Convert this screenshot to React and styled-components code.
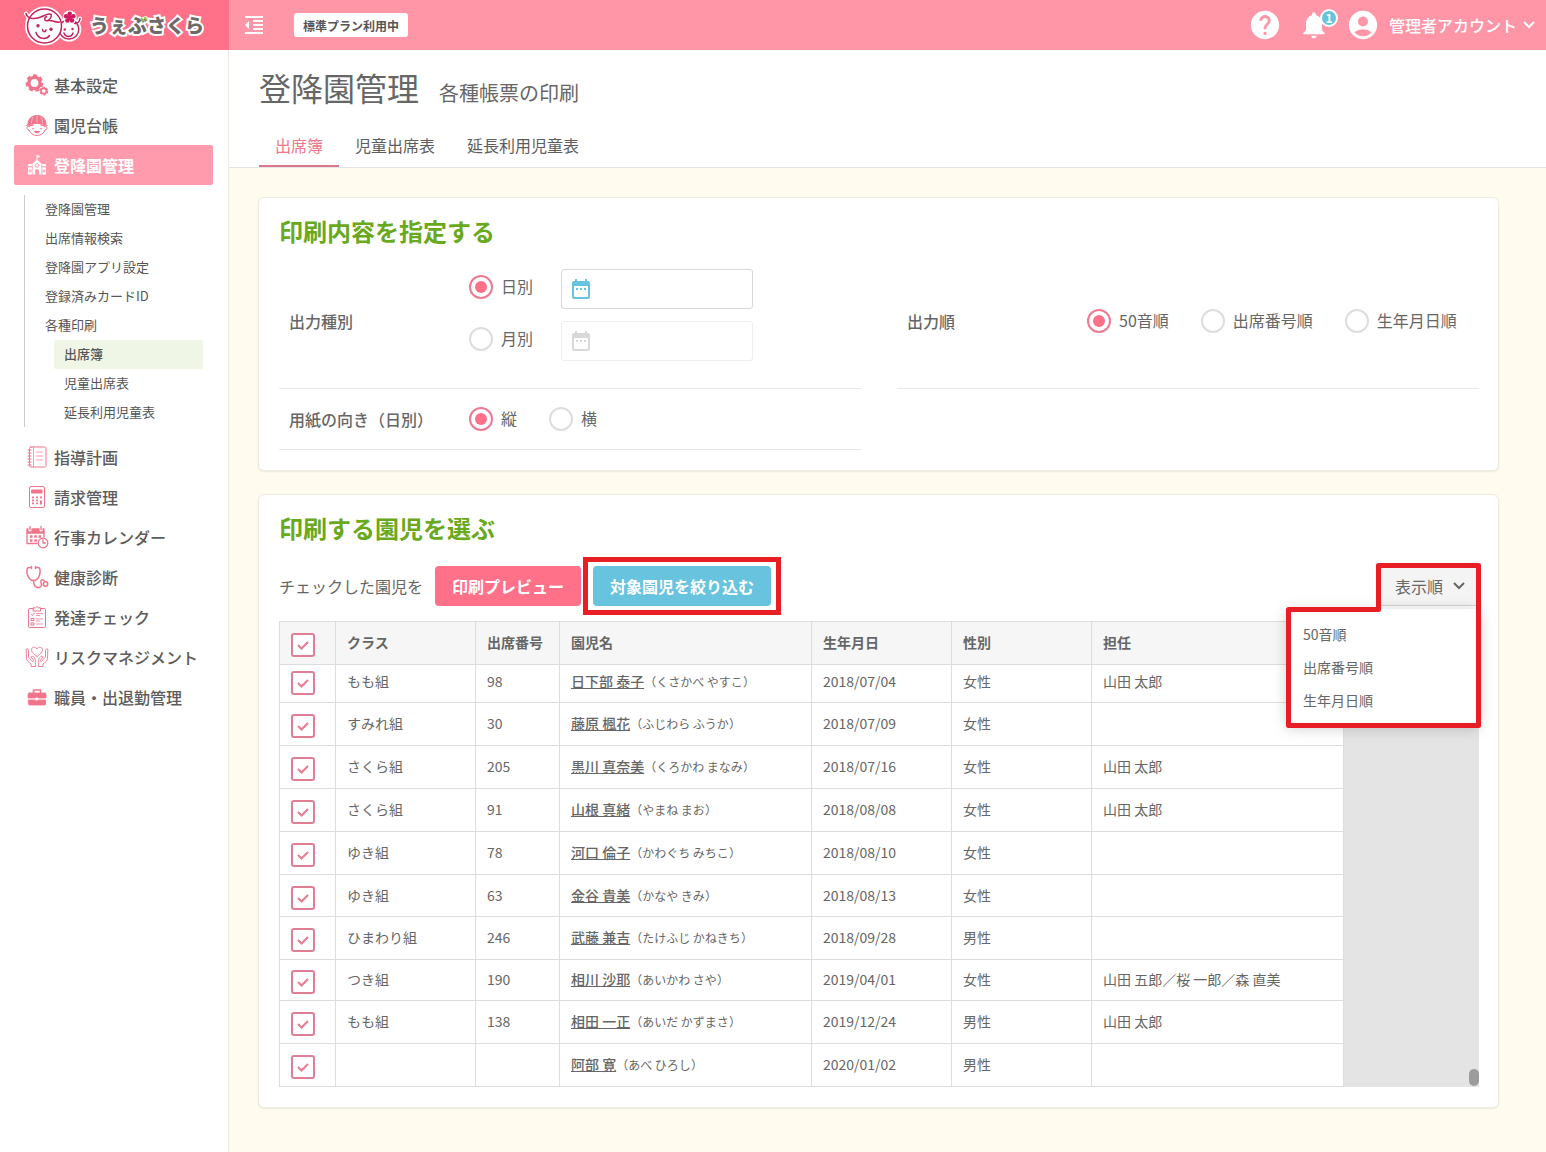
import React from 'react';
import styled, { createGlobalStyle, css } from 'styled-components'
import {
    MdFormatIndentDecrease,
    MdHelp,
    MdNotifications,
    MdAccountCircle,
    MdDateRange,
} from 'react-icons/md'

const GlobalStyle = createGlobalStyle`
    *, *::before, *::after {
        box-sizing: border-box;
    }

    body {
        margin: 0;
        background: #fffbef;
        color: #666;
        font-family: 'Noto Sans CJK JP', sans-serif;
        font-size: 16px;
        line-height: 24px;
    }

    button, input {
        font: inherit;
        color: inherit;
    }

    ul {
        margin: 0;
        padding: 0;
        list-style: none;
    }

    a {
        color: inherit;
        text-decoration: none;
    }
`

// Header
const Header = styled.header`
    display: flex;
    height: 50px;
    background: #ff96a8;
    color: #fff;
`

const Brand = styled.a`
    flex: none;
    width: 229px;
    padding-left: 22px;
    display: flex;
    align-items: center;
    gap: 8px;
    background: #ff7089;
`

const BrandName = styled.span`
    position: relative;
    color: #6f6868;
    font-size: 19px;
    font-weight: 900;
    -webkit-text-stroke: 4px #fff;
    paint-order: stroke fill;

    svg {
        position: absolute;
        top: 3px;
        left: 50px;
    }
`

const HeaderBar = styled.div`
    flex: 1;
    padding: 0 10px 0 13px;
    display: flex;
    align-items: center;
    justify-content: space-between;
`

const HeaderGroup = styled.div`
    display: flex;
    align-items: center;
    gap: ${props => props.$gap}px;
`

const IconButton = styled.button`
    position: relative;
    padding: 0;
    display: flex;
    align-items: center;
    border: 0;
    background: none;
    color: #fff;
`

const PlanLabel = styled.span`
    padding: 1px 9px 0;
    border-radius: 3px;
    background: #fff;
    color: #555;
    font-size: 12px;
    font-weight: 700;
    line-height: 23px;
`

const Count = styled.span`
    position: absolute;
    top: 0;
    right: -8px;
    width: 18px;
    height: 18px;
    border: 2px solid #fff;
    border-radius: 50%;
    background: #67c3de;
    font-size: 12px;
    font-weight: 700;
    line-height: 14px;
    text-align: center;
`

const AccountButton = styled(IconButton)`
    gap: 9px;
    font-weight: 500;

    .chevron {
        margin-left: -4px;
    }
`

// Layout
const Page = styled.div`
    display: flex;
    min-height: calc(100vh - 50px);
`

const Sidebar = styled.nav`
    flex: none;
    width: 229px;
    padding: 15px 15px 15px 14px;
    border-right: 1px solid #eeebe0;
    background: #fff;
`

const Main = styled.main`
    flex: 1;
    min-width: 0;
`

// Sidebar
const NavLink = styled.a`
    height: 40px;
    padding-left: 11px;
    display: flex;
    align-items: center;
    gap: 5px;
    border-radius: 2px;
    color: ${props => props.$active ? '#fff' : '#5c5c5c'};
    background: ${props => props.$active ? '#ff9bad' : 'none'};
    font-weight: ${props => props.$active ? 700 : 500};

    svg {
        flex: none;
        color: ${props => props.$active ? '#fff' : '#f0748b'};
    }
`

const SubMenu = styled.ul`
    margin: 10px;
    padding-left: 10px;
    border-left: 1px solid #ccc;
`

const SubLink = styled.a`
    display: block;
    margin-left: ${props => props.$nested ? 19 : 0}px;
    padding: 0 0 2px 10px;
    border-radius: 2px;
    background: ${props => props.$active ? '#f0f6e6' : 'none'};
    color: #555;
    font-size: 13px;
    font-weight: ${props => props.$active ? 500 : 400};
    line-height: 27px;
`

// Title and tabs
const PageHeader = styled.div`
    padding: 17px 30px 0;
    border-bottom: 1px solid #e4e6e6;
    background: #fff;
`

const Heading = styled.div`
    display: flex;
    align-items: baseline;
    gap: 20px;

    h1 {
        margin: 0;
        font-size: 32px;
        font-weight: 400;
        line-height: 40px;
    }

    p {
        margin: 0;
        font-size: 20px;
    }
`

const Tabs = styled.div`
    display: flex;
    margin-top: 18px;
`

const Tab = styled.a`
    padding: 8px 16px;
    border-bottom: 2px solid ${props => props.$active ? '#e0768c' : 'transparent'};
    color: ${props => props.$active ? '#f0768c' : '#5c5c5c'};
`

// Cards
const Content = styled.div`
    padding: 29px 47px 43px 29px;
    display: flex;
    flex-direction: column;
    gap: 23px;
`

const Card = styled.section`
    padding: 17px 19px 20px 20px;
    border: 1px solid #eeebe0;
    border-radius: 6px;
    background: #fff;
    box-shadow: 0 1px 2px rgba(0, 0, 0, 0.08);

    h2 {
        margin: 0 0 7px;
        color: #6aa81c;
        font-size: 24px;
        font-weight: 700;
        line-height: 32px;
    }
`

const FormGrid = styled.div`
    display: grid;
    grid-template-columns: 1fr 1fr;
    column-gap: 36px;
`

const FormRow = styled.div`
    padding: 15px 10px;
    display: flex;
    align-items: center;
    border-bottom: 1px solid #e8e8e8;

    .name {
        flex: none;
        width: 180px;
        font-weight: 500;
    }
`

const RadioGroup = styled.div`
    display: flex;
    gap: 32px;
`

const RadioLine = styled.div`
    margin-bottom: 12px;
    display: flex;
    align-items: flex-start;
    gap: 28px;
`

const RadioLabel = styled.label`
    height: ${props => props.$tall ? 36 : 30}px;
    display: flex;
    align-items: center;
    gap: 8px;
    white-space: nowrap;

    span {
        padding-bottom: 2px;
    }

    input {
        flex: none;
        width: 24px;
        height: 24px;
        margin: 0;
        display: flex;
        align-items: center;
        justify-content: center;
        appearance: none;
        border: 2px solid #ddd;
        border-radius: 50%;
        background: #fff;
    }

    input:checked {
        border-color: #ec7a90;
    }

    input:checked::after {
        content: '';
        width: 12px;
        height: 12px;
        border-radius: 50%;
        background: #ff7089;
    }
`

const DateField = styled.label`
    width: 192px;
    height: 40px;
    padding: 0 7px;
    display: flex;
    align-items: center;
    border: 1px solid ${props => props.$disabled ? '#eee' : '#d8d8d8'};
    border-radius: 3px;
    background: #fff;
    color: ${props => props.$disabled ? '#d8d8d8' : '#67c3de'};

    svg {
        flex: none;
    }

    input {
        flex: 1;
        min-width: 0;
        border: 0;
        outline: 0;
        background: none;
        color: #666;
    }
`

// Toolbar
const Toolbar = styled.div`
    margin: 22px 0 15px;
    display: flex;
    align-items: center;
    gap: 12px;
`

const Button = styled.button`
    position: relative;
    height: 40px;
    padding: 0 17px;
    border: 0;
    border-radius: 4px;
    background: ${props => props.$blue ? '#67c3de' : '#ff7089'};
    color: #fff;
    font-weight: 700;
    white-space: nowrap;

    ${props => props.$marked && css`
        &::after {
            content: '';
            position: absolute;
            inset: -9px -10px;
            border: 5px solid #e81e25;
        }
    `}
`

const Sort = styled.div`
    position: relative;
    z-index: 2;
    margin-left: auto;
`

const SortButton = styled.button`
    width: 100px;
    height: 40px;
    padding: 0 13px 0 16px;
    display: flex;
    align-items: center;
    justify-content: space-between;
    border: 0;
    border-bottom: 1px solid #d4d4d4;
    background: #f4f4f4;
`

const SortMenu = styled.ul`
    position: absolute;
    top: 43px;
    right: 0;
    width: 192px;
    padding: 9px 0;
    background: #fff;
    box-shadow: 0 2px 14px rgba(0, 0, 0, 0.2);

    button {
        width: 100%;
        padding: 0 16px;
        border: 0;
        background: none;
        font-size: 14px;
        line-height: 33px;
        text-align: left;
        display: block;
    }
`

const SortMark = styled.svg`
    position: absolute;
    top: -3px;
    right: -2px;
    pointer-events: none;
`

// Table
const TableArea = styled.div`
    position: relative;
    overflow: hidden;
    background: #e4e4e4;
`

const ScrollThumb = styled.span`
    position: absolute;
    right: 0;
    bottom: 1px;
    width: 10px;
    height: 17px;
    border-radius: 5px;
    background: #9c9c9c;
`

const Table = styled.table`
    width: 1065px;
    table-layout: fixed;
    border-collapse: separate;
    border-spacing: 0;
    border-top: 1px solid #ddd;
    border-right: 1px solid #ddd;
    background: #fff;
    font-size: 14px;
    line-height: 20px;

    th, td {
        padding: 0 0 2px 11px;
        border-left: 1px solid #ddd;
        border-bottom: 1px solid #ddd;
        text-align: left;
        white-space: nowrap;
    }

    th {
        height: 43px;
        background: #f6f6f6;
        font-weight: 700;
    }

    .check {
        padding-top: 4px;
        padding-bottom: 0;
    }

    .name {
        font-weight: 500;
        text-decoration: underline;
    }

    .kana {
        font-size: 12px;
        line-height: 12px;
    }
`

const Row = styled.tr`
    height: ${props => props.$height}px;

    /* the first row is partly scrolled under the header */
    &:first-child td {
        padding-bottom: 6px;
    }
`

const Check = styled.span`
    position: relative;
    display: block;
    width: 24px;
    height: 24px;

    input {
        width: 24px;
        height: 24px;
        margin: 0;
        display: block;
        appearance: none;
        border: 2px solid #e07f94;
        border-radius: 3px;
        background: #fff;
    }

    svg {
        position: absolute;
        inset: 0;
        color: #ec7a90;
        pointer-events: none;
    }
`

const Chevron = () => (
    <svg className="chevron" width="14" height="14" viewBox="0 0 14 14" fill="none" stroke="currentColor" strokeWidth="2">
        <path d="M2 4 7 9 12 4" />
    </svg>
)

const LogoMark = () => (
    <svg width="60" height="44" viewBox="0 0 60 44" fill="none" strokeLinecap="round" strokeLinejoin="round">
        <g fill="#fff" stroke="#fff" strokeWidth="5">
            <circle cx="22.500" cy="23" r="17" />
            <circle cx="47" cy="26.300" r="9.800" />
            <path d="M4 10.500c2 5 7 6 12 4M58 15.500c-.5 3-2 4.500-5 5" strokeWidth="4" />
        </g>
        <g stroke="#c4245e" strokeWidth="1.500">
            <circle cx="47" cy="26.300" r="9.800" />
            <path d="M58 15.500c-.5 3.500-2.500 5-5.500 5M42 30c1.500 4.500 7.500 4.500 9 0" />
            <circle cx="22.500" cy="23" r="17" fill="#fff" />
            <path d="M4 10.500c1.500 5.500 9 6.500 16 3 3-1.500 5.500-2.500 7.500-2.500 3.500 0 1.500 4.500-1.500 6.500-2.500 1.500-5-2-1.500-4M26.500 17.500c4-.5 7 2.500 11 1.500" />
            <path d="M14 29.500c2 7 10.500 7.500 13.500 3M20.500 26.500c0 2.500 3 3 3.500.500" />
        </g>
        <g fill="#c4245e">
            <circle cx="16" cy="22.700" r="1.700" />
            <circle cx="29" cy="26.300" r="1.700" />
            <circle cx="42.700" cy="26.500" r="1.200" />
            <circle cx="50.500" cy="26" r="1.200" />
        </g>
        <circle cx="47.700" cy="14.500" r="7" fill="#fff" />
        <g fill="#d01c5c">
            <circle cx="47.700" cy="10.700" r="2.300" />
            <circle cx="51.300" cy="13.300" r="2.300" />
            <circle cx="50" cy="17.500" r="2.300" />
            <circle cx="45.400" cy="17.500" r="2.300" />
            <circle cx="44.100" cy="13.300" r="2.300" />
            <circle cx="47.700" cy="14.500" r="2.500" />
        </g>
    </svg>
)

const LogoAccent = () => (
    <svg width="10" height="8" viewBox="0 0 10 8" fill="none" stroke="#8cc63f" strokeWidth="1.800" strokeLinecap="round">
        <path d="M1.500 2.500 3 5M5 1.500 6.500 4" />
    </svg>
)

const Icon = ({ children, width = 1.2 }) => (
    <svg width="24" height="24" viewBox="0 0 24 24" fill="none" stroke="currentColor" strokeWidth={width} strokeLinecap="round" strokeLinejoin="round">
        {children}
    </svg>
)

const GearsIcon = () => (
    <Icon>
        <circle cx="9.500" cy="10" r="5.600" strokeWidth="3.400" />
        <circle cx="9.500" cy="10" r="7.600" strokeWidth="2.400" strokeDasharray="4 2.820" strokeLinecap="butt" />
        <circle cx="18.800" cy="18" r="2.700" strokeWidth="1.700" />
        <circle cx="18.800" cy="18" r="3.800" strokeWidth="1.200" strokeDasharray="2.400 1.580" strokeLinecap="butt" />
    </Icon>
)

const ChildIcon = () => (
    <Icon width={1}>
        <path d="M3 11.500C3 5.500 7 2.500 12 2.500s9 3 9 9c-6-2-12-2-18 0Z" fill="currentColor" />
        <path d="M12 2.500v7M8 4c-1 2-1.500 4-1.500 6M16 4c1 2 1.500 4 1.500 6" stroke="#fff" strokeWidth=".5" />
        <path d="M1.500 12.500c6-3 15-3 21 0M3 13c-2 1-1 4 1 4 1 3 4 5.500 8 5.500s7-2.500 8-5.500c2 0 3-3 1-4" />
        <path d="M4 13.500c0-1 2-1.500 4-1.500M20 13.500c0-1-2-1.500-4-1.500" strokeWidth="1.600" />
        <path d="M8 15.500v.2M16 15.500v.2" strokeWidth="1.600" />
        <path d="M9.500 18.500h5c-.5 1.800-4.500 1.800-5 0Z" fill="currentColor" />
    </Icon>
)

const SchoolIcon = () => (
    <Icon width={1}>
        <g fill="currentColor" stroke="none">
            <path d="M11.500 2h.8l3.200 1.500-3.200 1.500v2l4.700 4v10.500h-3V18a2 2 0 0 0-4 0v3.500H7V11l4.500-4Z" />
            <path d="M3.500 11H7v2.500H2.500ZM17 11h3.500l1 2.500H17ZM3 14h4v7.500H3ZM17 14h4v7.500h-4Z" />
        </g>
        <g stroke="#ff9bad">
            <circle cx="12" cy="12.500" r="1.800" />
            <path d="M3 13.800h4M17 13.800h4M7.200 12v9M16.800 12v9M4.500 17h1.500v2H4.500ZM18.300 17h1.500v2h-1.500Z" strokeWidth=".8" />
        </g>
    </Icon>
)

const NotebookIcon = () => (
    <Icon width={1}>
        <rect x="4.500" y="2" width="16.500" height="20" rx="1.500" />
        <path d="M8.500 2v20" strokeWidth=".7" />
        <path d="M3 5h3M3 8h3M3 11h3M3 14h3M3 17h3M3 20h3" strokeWidth="1.200" />
        <path d="M11 7h7M11 11h7M11 15h7" strokeWidth=".7" />
    </Icon>
)

const CalculatorIcon = () => (
    <Icon width={1}>
        <rect x="4.500" y="1.500" width="15" height="21" rx="1.500" />
        <path d="M7 5h10v3H7Z" fill="currentColor" />
        <path d="M8 11.500v8M12 11.500v8M16 11.500v3" strokeWidth="2" strokeDasharray="1.800 1.200" strokeLinecap="butt" />
        <path d="M16 15.500v4" strokeWidth="2" strokeLinecap="butt" />
    </Icon>
)

const EventIcon = () => (
    <Icon width={1.3}>
        <path d="M2 4h17v4H2Z" fill="currentColor" />
        <path d="M5 1.500v3.500M16 1.500v3.500" stroke="#fff" strokeWidth="3" />
        <path d="M5 1.500v3M16 1.500v3M2 8v10.500h10M19 8v4" />
        <path d="M5 11.500h11.500M5 15.500h7.500" strokeWidth="2.300" strokeDasharray="2.500 1.800" strokeLinecap="butt" />
        <circle cx="18" cy="18" r="4.800" fill="#fff" />
        <path d="M18 15v3h2.500" />
    </Icon>
)

const StethoscopeIcon = () => (
    <Icon width={1.5}>
        <path d="M6 2.500H4C1.500 2.500 1.500 7 2.500 10c1 3 3 5.500 6 5.500s5-2.500 6-5.500c1-3 1-7.500-1.500-7.500h-2" />
        <path d="M6.500 1.500v2M10.500 1.500v2M8.500 15.500c0 8.500 7.500 8.500 8 4.500.2-2.500-2-3.500 0-5 1.800-1 3 .5 3 1.500" />
        <circle cx="20.500" cy="19" r="2.200" />
    </Icon>
)

const ChecklistIcon = () => (
    <Icon width={1}>
        <rect x="3.500" y="3.500" width="17" height="19" rx="1" />
        <path d="M8.500 2.800h2l1.500-1.300 1.500 1.300h2V6h-7Z" fill="#fff" />
        <path d="M6.500 9.500l1 1 2-2.500M6.500 13.500h2.500v2H6.500ZM6.500 18h2.500v2H6.500Z" />
        <path d="M11.500 8.500h6M11.500 10.500h4M11.500 14h6M11.500 16h4M11.500 19h6" strokeWidth=".8" strokeDasharray="3 1" />
    </Icon>
)

const HandsIcon = () => (
    <Icon width={.9}>
        <path d="M12 11.500C9 9 6.500 7.300 6.500 4.800c0-3 4-3.600 5.500-.8 1.500-2.800 5.500-2.200 5.500.8 0 2.500-2.500 4.200-5.500 6.700Z" />
        <path d="M1.500 4c1.500-.5 2 .5 2 1.500V12l4 4.500c1 0 1.500-.5 1-1.500L6 12c1-1.500 2.500-.5 3 .3 1.500 1.700 1.500 3 1.500 9.200H6v-2.500C3 17 1.500 15.500 1.500 13.500Z" />
        <path d="M22.500 4c-1.500-.5-2 .5-2 1.500V12l-4 4.500c-1 0-1.500-.5-1-1.500l2.500-3c-1-1.500-2.500-.5-3 .3-1.500 1.700-1.500 3-1.500 9.200H18v-2.500c3-2 4.500-3.500 4.500-5.500Z" />
    </Icon>
)

const BriefcaseIcon = () => (
    <Icon width={1.6}>
        <path d="M8.500 8V5h7v3" />
        <path d="M4.500 8h15a1.500 1.500 0 0 1 1.500 1.500v3.500H3V9.500A1.500 1.500 0 0 1 4.500 8ZM3.500 15h17v4a1 1 0 0 1-1 1h-15a1 1 0 0 1-1-1Z" fill="currentColor" strokeWidth=".8" />
        <path d="M11 13h2v2h-2Z" fill="#fff" stroke="#fff" strokeWidth=".8" />
    </Icon>
)

const NAV_TOP = [
    { label: '基本設定', icon: GearsIcon },
    { label: '園児台帳', icon: ChildIcon },
    { label: '登降園管理', icon: SchoolIcon, active: true },
]

const SUB_MENU = [
    { label: '登降園管理' },
    { label: '出席情報検索' },
    { label: '登降園アプリ設定' },
    { label: '登録済みカードID' },
    { label: '各種印刷' },
    { label: '出席簿', nested: true, active: true },
    { label: '児童出席表', nested: true },
    { label: '延長利用児童表', nested: true },
]

const NAV_BOTTOM = [
    { label: '指導計画', icon: NotebookIcon },
    { label: '請求管理', icon: CalculatorIcon },
    { label: '行事カレンダー', icon: EventIcon },
    { label: '健康診断', icon: StethoscopeIcon },
    { label: '発達チェック', icon: ChecklistIcon },
    { label: 'リスクマネジメント', icon: HandsIcon },
    { label: '職員・出退勤管理', icon: BriefcaseIcon },
]

const SORT_ORDERS = ['50音順', '出席番号順', '生年月日順']

const CHILDREN = [
    { group: 'もも組', no: '98', name: '日下部 泰子', kana: 'くさかべ やすこ', birthday: '2018/07/04', sex: '女性', teacher: '山田 太郎', height: 38 },
    { group: 'すみれ組', no: '30', name: '藤原 楓花', kana: 'ふじわら ふうか', birthday: '2018/07/09', sex: '女性', teacher: '' },
    { group: 'さくら組', no: '205', name: '黒川 真奈美', kana: 'くろかわ まなみ', birthday: '2018/07/16', sex: '女性', teacher: '山田 太郎' },
    { group: 'さくら組', no: '91', name: '山根 真緒', kana: 'やまね まお', birthday: '2018/08/08', sex: '女性', teacher: '山田 太郎' },
    { group: 'ゆき組', no: '78', name: '河口 倫子', kana: 'かわぐち みちこ', birthday: '2018/08/10', sex: '女性', teacher: '' },
    { group: 'ゆき組', no: '63', name: '金谷 貴美', kana: 'かなや きみ', birthday: '2018/08/13', sex: '女性', teacher: '', height: 42 },
    { group: 'ひまわり組', no: '246', name: '武藤 兼吉', kana: 'たけふじ かねきち', birthday: '2018/09/28', sex: '男性', teacher: '' },
    { group: 'つき組', no: '190', name: '相川 沙耶', kana: 'あいかわ さや', birthday: '2019/04/01', sex: '女性', teacher: '山田 五郎／桜 一郎／森 直美', height: 41 },
    { group: 'もも組', no: '138', name: '相田 一正', kana: 'あいだ かずまさ', birthday: '2019/12/24', sex: '男性', teacher: '山田 太郎' },
    { group: '', no: '', name: '阿部 寛', kana: 'あべ ひろし', birthday: '2020/01/02', sex: '男性', teacher: '' },
]

function NavItem({ item }){
    const ItemIcon = item.icon
    return(
        <NavLink href="#" $active={item.active}>
            <ItemIcon />
            {item.label}
        </NavLink>
    )
}

function Radio({ name, label, checked, tall }){
    return(
        <RadioLabel $tall={tall}>
            <input type="radio" name={name} defaultChecked={checked} />
            <span>{label}</span>
        </RadioLabel>
    )
}

function CheckBox({ label }){
    return(
        <Check>
            <input type="checkbox" defaultChecked aria-label={label} />
            <svg width="24" height="24" viewBox="0 0 24 24" fill="none" stroke="currentColor" strokeWidth="2">
                <path d="M7 12 10.500 15.500 17 9" />
            </svg>
        </Check>
    )
}

function Child({ child }){
    const { group, no, name, kana, birthday, sex, teacher, height = 43 } = child
    return(
        <Row $height={height}>
            <td className="check"><CheckBox label={name} /></td>
            <td>{group}</td>
            <td>{no}</td>
            <td>
                <a href="#" className="name">{name}</a>
                <span className="kana">（{kana}）</span>
            </td>
            <td>{birthday}</td>
            <td>{sex}</td>
            <td>{teacher}</td>
        </Row>
    )
}

function App(){
    return(
        <>
            <GlobalStyle />
            <Header>
                <Brand href="#">
                    <LogoMark />
                    <BrandName>うぇぶさくら<LogoAccent /></BrandName>
                </Brand>
                <HeaderBar>
                    <HeaderGroup $gap={28}>
                        <IconButton aria-label="メニュー"><MdFormatIndentDecrease size={24} /></IconButton>
                        <PlanLabel>標準プラン利用中</PlanLabel>
                    </HeaderGroup>
                    <HeaderGroup $gap={16}>
                        <IconButton aria-label="ヘルプ"><MdHelp size={34} /></IconButton>
                        <IconButton aria-label="お知らせ">
                            <MdNotifications size={32} />
                            <Count>1</Count>
                        </IconButton>
                        <AccountButton>
                            <MdAccountCircle size={34} />
                            管理者アカウント
                            <Chevron />
                        </AccountButton>
                    </HeaderGroup>
                </HeaderBar>
            </Header>
            <Page>
                <Sidebar>
                    {NAV_TOP.map(item => <NavItem key={item.label} item={item} />)}
                    <SubMenu>
                        {SUB_MENU.map(item => (
                            <li key={item.label}>
                                <SubLink href="#" $nested={item.nested} $active={item.active}>{item.label}</SubLink>
                            </li>
                        ))}
                    </SubMenu>
                    {NAV_BOTTOM.map(item => <NavItem key={item.label} item={item} />)}
                </Sidebar>
                <Main>
                    <PageHeader>
                        <Heading>
                            <h1>登降園管理</h1>
                            <p>各種帳票の印刷</p>
                        </Heading>
                        <Tabs>
                            <Tab href="#" $active>出席簿</Tab>
                            <Tab href="#">児童出席表</Tab>
                            <Tab href="#">延長利用児童表</Tab>
                        </Tabs>
                    </PageHeader>
                    <Content>
                        <Card>
                            <h2>印刷内容を指定する</h2>
                            <FormGrid>
                                <FormRow>
                                    <span className="name">出力種別</span>
                                    <div>
                                        <RadioLine>
                                            <Radio name="type" label="日別" checked tall />
                                            <DateField>
                                                <MdDateRange size={24} />
                                                <input type="text" aria-label="日付" />
                                            </DateField>
                                        </RadioLine>
                                        <RadioLine>
                                            <Radio name="type" label="月別" tall />
                                            <DateField $disabled>
                                                <MdDateRange size={24} />
                                                <input type="text" aria-label="年月" disabled />
                                            </DateField>
                                        </RadioLine>
                                    </div>
                                </FormRow>
                                <FormRow>
                                    <span className="name">出力順</span>
                                    <RadioGroup>
                                        {SORT_ORDERS.map((label, i) => (
                                            <Radio key={label} name="order" label={label} checked={i === 0} />
                                        ))}
                                    </RadioGroup>
                                </FormRow>
                                <FormRow>
                                    <span className="name">用紙の向き（日別）</span>
                                    <RadioGroup>
                                        <Radio name="direction" label="縦" checked />
                                        <Radio name="direction" label="横" />
                                    </RadioGroup>
                                </FormRow>
                            </FormGrid>
                        </Card>
                        <Card>
                            <h2>印刷する園児を選ぶ</h2>
                            <Toolbar>
                                <span>チェックした園児を</span>
                                <Button>印刷プレビュー</Button>
                                <Button $blue $marked>対象園児を絞り込む</Button>
                                <Sort>
                                    <SortButton aria-expanded="true">
                                        表示順
                                        <Chevron />
                                    </SortButton>
                                    <SortMenu>
                                        {SORT_ORDERS.map(label => <li key={label}><button>{label}</button></li>)}
                                    </SortMenu>
                                    <SortMark width="195" height="165" viewBox="0 0 195 165" fill="none" stroke="#e81e25" strokeWidth="5" strokeLinejoin="round">
                                        <path d="M92.500 2.500h100v160H2.500v-116h90Z" />
                                    </SortMark>
                                </Sort>
                            </Toolbar>
                            <TableArea>
                                <Table>
                                    <colgroup>
                                        <col width="56" />
                                        <col width="140" />
                                        <col width="84" />
                                        <col width="252" />
                                        <col width="140" />
                                        <col width="140" />
                                        <col width="252" />
                                    </colgroup>
                                    <thead>
                                        <tr>
                                            <th className="check"><CheckBox label="すべて選択" /></th>
                                            <th>クラス</th>
                                            <th>出席番号</th>
                                            <th>園児名</th>
                                            <th>生年月日</th>
                                            <th>性別</th>
                                            <th>担任</th>
                                        </tr>
                                    </thead>
                                    <tbody>
                                        {CHILDREN.map(child => <Child key={child.name} child={child} />)}
                                    </tbody>
                                </Table>
                                <ScrollThumb />
                            </TableArea>
                        </Card>
                    </Content>
                </Main>
            </Page>
        </>
    )
}

export default App
